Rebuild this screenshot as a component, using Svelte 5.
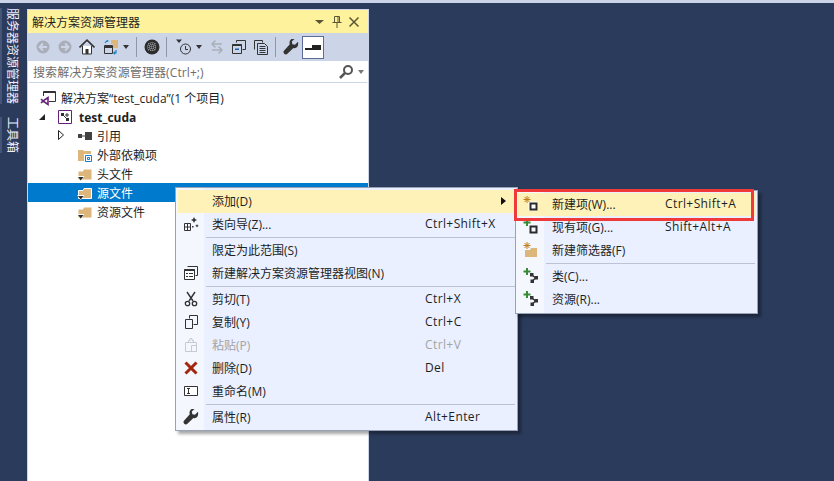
<script>
  const rows = [
    { label: '添加(D)', hot: true, arrow: true },
    { label: '类向导(Z)...', key: 'Ctrl+Shift+X', icon: 'wizard' },
    { sep: true },
    { label: '限定为此范围(S)' },
    { label: '新建解决方案资源管理器视图(N)', icon: 'view' },
    { sep: true },
    { label: '剪切(T)', key: 'Ctrl+X', icon: 'cut' },
    { label: '复制(Y)', key: 'Ctrl+C', icon: 'copy' },
    { label: '粘贴(P)', key: 'Ctrl+V', icon: 'paste', off: true },
    { label: '删除(D)', key: 'Del', icon: 'del' },
    { label: '重命名(M)', icon: 'rename' },
    { sep: true },
    { label: '属性(R)', key: 'Alt+Enter', icon: 'wrench' }
  ]

  const subRows = [
    { label: '新建项(W)...', key: 'Ctrl+Shift+A', icon: 'newitem', hot: true },
    { label: '现有项(G)...', key: 'Shift+Alt+A', icon: 'existing' },
    { label: '新建筛选器(F)', icon: 'newfilter' },
    { sep: true },
    { label: '类(C)...', icon: 'cls' },
    { label: '资源(R)...', icon: 'cls' }
  ]

  const tree = [
    { label: '引用', icon: 'refs', chevron: true },
    { label: '外部依赖项', icon: 'extern' },
    { label: '头文件', icon: 'filter' },
    { label: '源文件', icon: 'filter', selected: true },
    { label: '资源文件', icon: 'filter' }
  ]
</script>

{#snippet wrenchPath()}
  <path d="M15 2.800l-3 3-2.600-.6-.6-2.600 3-2.900c-2.700-.7-5.300 1.200-5.300 4 0 .6.100 1.100.3 1.600L1.200 11.400c-1 1-1 2.400 0 3.300.9.900 2.300.9 3.200 0l6-5.700c2.900 1 5.500-1.600 4.600-6.200z" fill="#333" />
{/snippet}

{#snippet menuIcon(name)}
  <svg width="16" height="16" viewBox="0 0 16 16">
    {#if name === 'wizard'}
      <path d="M1.500 7.500h6v7h-6zM1.500 11h6M4.500 7.500v7" fill="none" stroke="#333" />
      <path d="M11 1l1 2 2 1-2 1-1 2-1-2-2-1 2-1zM14 8l.6 1.200 1.200.6-1.200.6-.6 1.200-.6-1.200-1.200-.6 1.200-.6zM9 10h1.500v1.500H9z" fill="#333" />
    {:else if name === 'view'}
      <path d="M4.500 1.500h10v9h-2" fill="none" stroke="#333" />
      <path d="M1.500 4.500h10v10h-10z" fill="#fff" stroke="#333" />
      <path d="M1.500 4h10v2h-10zM3 8h2v1H3zM6 8h4v1H6zM3 11h2v1H3zM6 11h4v1H6z" fill="#333" />
    {:else if name === 'cut'}
      <path d="M4 1l6 9M12 1L6 10" fill="none" stroke="#333" stroke-width="1.400" />
      <circle cx="4.500" cy="12.500" r="2.200" fill="none" stroke="#333" stroke-width="1.300" />
      <circle cx="11.500" cy="12.500" r="2.200" fill="none" stroke="#333" stroke-width="1.300" />
    {:else if name === 'copy'}
      <path d="M6.500 4.500v-3h8v9h-4" fill="none" stroke="#333" />
      <path d="M2.500 5.500h7v9h-7z" fill="none" stroke="#333" />
    {:else if name === 'paste'}
      <path d="M2.500 5.500h11v9h-11z M5.500 5.500v-2h1.500v-2h2v2h1.500v2 M8.500 8.500h5v6h-5z" fill="none" stroke="#c6cad2" />
    {:else if name === 'del'}
      <path d="M2.500 2.500l11 11M13.500 2.500l-11 11" fill="none" stroke="#a1260d" stroke-width="3" />
    {:else if name === 'rename'}
      <path d="M1.500 3.500h13v9h-13z" fill="#fff" stroke="#333" />
      <path d="M4 5.500h3M4 10.500h3M5.500 5.500v5" fill="none" stroke="#333" />
    {:else if name === 'wrench'}
      {@render wrenchPath()}
    {:else if name === 'newitem'}
      <path d="M5.500 5.500h9v9h-9z" fill="#fff" />
      <path d="M7.500 7.500h6v6h-6z" fill="none" stroke="#2b2b2b" stroke-width="2" />
      <path d="M4 0v7M.5 3.500h7M1.500 1l5 5M6.500 1l-5 5" stroke="#c27d1a" stroke-width="1" />
    {:else if name === 'existing'}
      <path d="M7.500 7.500h6v6h-6z" fill="none" stroke="#2b2b2b" stroke-width="2" />
      <path d="M4 0v7M.5 3.500h7" stroke="#388a34" stroke-width="2" />
    {:else if name === 'newfilter'}
      <path d="M2 8h5l1-2h6v9H2z" fill="#dcb67a" />
      <path d="M4 0v7M.5 3.500h7M1.500 1l5 5M6.500 1l-5 5" stroke="#c27d1a" stroke-width="1" />
    {:else if name === 'cls'}
      <path d="M8.500 6.500l4 3.500-3.500 3.500" fill="none" stroke="#333" stroke-width="1.300" />
      <path d="M7 5h3.500v3.500H7zM11.500 8H15v3.500h-3.500zM7.500 11.500H11V15H7.500z" fill="#333" />
      <path d="M4 0v7M.5 3.500h7" stroke="#388a34" stroke-width="2" />
    {/if}
  </svg>
{/snippet}

{#snippet treeIcon(name, selected)}
  <svg width="16" height="16" viewBox="0 0 16 16">
    {#if name === 'refs'}
      <path d="M1 6h4v4H1zM8 4h7v8H8z" fill="#424242" />
      <path d="M5 8h3" stroke="#424242" />
    {:else if name === 'extern'}
      <path d="M1 3h5l1 1h7v3H7v7H1z" fill="#dcb67a" />
      <path d="M8.500 8.500h6v6h-6z" fill="#fff" stroke="#1b80c4" />
      <path d="M10.500 10.500h2v2h-2z" fill="none" stroke="#1b80c4" />
    {:else}
      <path d="M1.500 5.500h4.500l1-2h7.500v10H1.500z" fill="#dcb67a" stroke={selected ? '#fff' : 'none'} />
      <path d="M0 10h7.500L3.700 15z" fill="#fff" />
      <path d="M1 11h5.500L3.700 14.500z" fill="#2a2a2a" />
    {/if}
  </svg>
{/snippet}

<div class="ide">
  <div class="topstrip"></div>
  <div class="workspace">
    <div class="rail">
      <span class="railtab">服务器资源管理器</span>
      <span class="railtab">工具箱</span>
    </div>

    <section class="explorer">
      <header class="titlebar">
        <span>解决方案资源管理器</span>
        <div class="titlebtns">
          <svg width="12" height="12" viewBox="0 0 12 12"><path d="M1 4h9L5.500 8z" fill="#5a5636" /></svg>
          <svg width="12" height="12" viewBox="0 0 12 12"><path d="M3.500 .5h5v6h-5zM1.500 6.500h9M6 7v5M7 1v5" fill="none" stroke="#5a5636" /></svg>
          <svg width="12" height="12" viewBox="0 0 12 12"><path d="M1.500 1.500l9 9M10.500 1.500l-9 9" stroke="#5a5636" stroke-width="1.500" /></svg>
        </div>
      </header>

      <div class="toolbar">
        <svg class="tool" width="16" height="16" viewBox="0 0 16 16"><circle cx="8" cy="8" r="6.500" fill="#a9aeb8" /><path d="M12 8H5M8 4.500L4.500 8 8 11.500" fill="none" stroke="#ccd5e8" stroke-width="1.800" /></svg>
        <svg class="tool" width="16" height="16" viewBox="0 0 16 16"><circle cx="8" cy="8" r="6.500" fill="#a9aeb8" /><path d="M4 8h7M8 4.500L11.500 8 8 11.500" fill="none" stroke="#ccd5e8" stroke-width="1.800" /></svg>
        <svg class="tool" width="16" height="16" viewBox="0 0 16 16"><path d="M3.500 7v8h9V7" fill="#fff" stroke="#333" /><path d="M.5 8.500L8 1.200l7.500 7.300" fill="none" stroke="#333" stroke-width="1.600" /><path d="M6.500 10h3v5h-3z" fill="#333" /></svg>
        <svg class="tool solbtn" width="16" height="16" viewBox="0 0 16 16"><path d="M8 1h7v8H10V5H8z" fill="#dcb67a" /><path d="M1.500 6.500h8v8h-8z" fill="#ccd5e8" stroke="#333" /><path d="M1.500 7h8v2h-8z" fill="#333" /><path d="M2 4l2-2.500M4 1.500l1.500.5M4 1.500V3" fill="none" stroke="#1b80c4" stroke-width="1.200" /><path d="M13 11v3h-2.500M10.500 14l1.500-1.300M10.500 14l1.500 1.300" fill="none" stroke="#1b80c4" stroke-width="1.200" /></svg>
        <svg class="caret" width="8" height="4" viewBox="0 0 8 4"><path d="M1 0h6L4 4z" fill="#333" /></svg>
        <i class="tbsep"></i>
        <svg class="tool" width="16" height="16" viewBox="0 0 16 16"><circle cx="8" cy="8" r="7.500" fill="#2d2d2d" /><path d="M5 4v8M7 3v10M9 3v10M11 4v8M4 5h8M3 7h10M3 9h10M4 11h8" stroke="#c9ccd6" stroke-width=".7" stroke-dasharray="1 1" /></svg>
        <i class="tbsep"></i>
        <svg class="tool clock" width="16" height="16" viewBox="0 0 16 16"><circle cx="9.500" cy="10" r="5" fill="none" stroke="#333" /><path d="M9.500 7v3.500H12" fill="none" stroke="#333" /><path d="M0 .5h6L3 4z" fill="#333" /></svg>
        <svg class="caret" width="8" height="4" viewBox="0 0 8 4"><path d="M1 0h6L4 4z" fill="#333" /></svg>
        <svg class="tool" width="16" height="16" viewBox="0 0 16 16"><path d="M3 5h10M6.500 1.500L3 5l3.500 3.500M13 11H3M9.500 7.500L13 11l-3.500 3.500" fill="none" stroke="#a9aeb8" stroke-width="1.500" /></svg>
        <svg class="tool" width="16" height="16" viewBox="0 0 16 16"><path d="M5.500 3.500v-2h9v9h-3" fill="none" stroke="#333" /><path d="M1.500 5.500h9v9h-9z" fill="none" stroke="#333" /><path d="M4 9.500h4v1.500H4z" fill="#1b5fa8" /><path d="M1.500 5.500h9v1.500h-9z" fill="#333" /></svg>
        <svg class="tool" width="16" height="16" viewBox="0 0 16 16"><path d="M1.500 10.500v-9h8v2M4.500 15.500v-11h7l3 3v8z" fill="none" stroke="#333" /><path d="M6.500 7.500h6M6.500 9.500h6M6.500 11.500h6M6.500 13.500h6" stroke="#333" /></svg>
        <i class="tbsep"></i>
        <svg class="tool wrench" width="16" height="16" viewBox="0 0 16 16">{@render wrenchPath()}</svg>
        <span class="toggle"><svg width="16" height="16" viewBox="0 0 16 16"><path d="M0 9h16v2H0zM7 6h9v3H7z" fill="#222" /></svg></span>
      </div>

      <div class="search">
        <span class="placeholder">搜索解决方案资源管理器(Ctrl+;)</span>
        <svg width="16" height="16" viewBox="0 0 16 16"><circle cx="10" cy="6" r="4" fill="none" stroke="#555" stroke-width="2" /><path d="M7 9l-5 5" stroke="#555" stroke-width="2.500" /></svg>
        <svg class="caret" width="8" height="4" viewBox="0 0 8 4"><path d="M1 0h6L4 4z" fill="#777" /></svg>
      </div>

      <div class="tree">
        <div class="node solution">
          <svg width="16" height="16" viewBox="0 0 16 16"><path d="M3.500 6V1.500h12v10H9" fill="none" stroke="#333" /><path d="M3.500 1.500h12v1.500h-12z" fill="#333" /><path d="M1 9l2 2-2 2M8 7.500v7L3 11z" fill="none" stroke="#68217a" stroke-width="1.600" /></svg>
          <span>解决方案“test_cuda”(1 个项目)</span>
        </div>
        <div class="node project">
          <svg class="expander" width="8" height="8" viewBox="0 0 8 8"><path d="M7 1v6H1z" fill="#222" /></svg>
          <svg width="16" height="16" viewBox="0 0 16 16"><path d="M1.500 1.500h13v13h-13z" fill="#fff" stroke="#68217a" /><path d="M4 4h3v3H4zM9 9h3v3H9z" fill="#333" /><path d="M7 7l2 2M10 4v4M8 6h4" stroke="#333" /></svg>
          <b>test_cuda</b>
        </div>
        {#each tree as item}
          <div class="node child" class:selected={item.selected}>
            {#if item.chevron}
              <svg class="chevron" width="8" height="10" viewBox="0 0 8 10"><path d="M1.500 .5l5 4.500-5 4.500z" fill="#fff" stroke="#222" /></svg>
            {/if}
            <span class="nodeicon">{@render treeIcon(item.icon, item.selected)}</span>
            <span>{item.label}</span>
          </div>
        {/each}
      </div>
    </section>
  </div>

  <div class="menu main">
    {#each rows as row}
      {#if row.sep}
        <div class="sep"></div>
      {:else}
        <div class="row" class:hot={row.hot} class:off={row.off}>
          <span class="gutter">{#if row.icon}{@render menuIcon(row.icon)}{/if}</span>
          <span class="label">{row.label}</span>
          {#if row.key}<span class="key">{row.key}</span>{/if}
          {#if row.arrow}<svg class="arrow" width="5" height="8" viewBox="0 0 5 8"><path d="M0 0l5 4-5 4z" fill="#111" /></svg>{/if}
        </div>
      {/if}
    {/each}
  </div>

  <div class="menu sub">
    {#each subRows as row}
      {#if row.sep}
        <div class="sep"></div>
      {:else}
        <div class="row" class:hot={row.hot}>
          <span class="gutter">{@render menuIcon(row.icon)}</span>
          <span class="label">{row.label}</span>
          {#if row.key}<span class="key">{row.key}</span>{/if}
        </div>
      {/if}
    {/each}
  </div>

  <div class="callout"></div>
</div>

<style>
  :global(body) {
    margin: 0;
    background: #2b3b5b;
  }

  .ide {
    position: relative;
    width: 834px;
    height: 481px;
    overflow: hidden;
    background: #2b3b5b;
    font-family: "Open Sans", "Noto Sans CJK SC", sans-serif;
    font-size: 12px;
    color: #1e1e1e;
  }

  .topstrip {
    height: 3px;
    background: #ccd5e8;
  }

  .workspace {
    display: flex;
    height: 478px;
    padding-top: 7px;
    box-sizing: border-box;
  }

  .rail {
    width: 28px;
    flex: none;
    margin-top: -2px;
    display: flex;
    flex-direction: column;
    align-items: flex-start;
    gap: 13px;
    color: #eef0ff;
  }

  .railtab {
    display: block;
    writing-mode: vertical-rl;
    text-orientation: sideways;
    white-space: nowrap;
    line-height: 12px;
    border-left: 2px solid #45557a;
    padding-left: 4px;
  }

  .explorer {
    width: 340px;
    flex: none;
    background: #fff;
    display: flex;
    flex-direction: column;
    box-shadow: 0 0 0 1px #ccd5e8;
  }

  .titlebar {
    height: 23px;
    background: #fff29d;
    display: flex;
    align-items: center;
    justify-content: space-between;
    padding: 0 7px 0 4px;
  }

  .titlebtns {
    display: flex;
    gap: 5px;
    padding-right: 1px;
  }

  .toolbar {
    height: 28px;
    background: #ccd5e8;
    display: flex;
    align-items: center;
    padding-left: 4px;
    box-sizing: border-box;
  }

  .tool {
    margin: 0 3px;
    flex: none;
  }

  .solbtn {
    margin-left: 5px;
    margin-right: 0;
  }

  .clock {
    margin-left: 5px;
    margin-right: 0;
  }

  .wrench {
    margin-right: 3px;
  }

  .caret {
    flex: none;
    margin: 0 3px;
  }

  .tbsep {
    width: 1px;
    height: 20px;
    background: #8f98ab;
    margin: 0 4px 0 3px;
  }

  .toggle {
    width: 22px;
    height: 23px;
    display: flex;
    align-items: center;
    justify-content: center;
    background: #fff;
    border: 1px solid #5d6b99;
    box-sizing: border-box;
  }

  .search {
    height: 22px;
    margin: 0 1px;
    background: #fff;
    border: 1px solid #ccd5e8;
    border-width: 0 0 1px;
    display: flex;
    align-items: center;
    padding: 0 0 0 4px;
    color: #6d6d6d;
    box-sizing: border-box;
  }

  .search .caret {
    margin-right: 2px;
  }

  .placeholder {
    flex: 1;
    letter-spacing: 0.1px;
  }

  .tree {
    padding-top: 5px;
  }

  .node {
    height: 19px;
    display: flex;
    align-items: center;
    white-space: nowrap;
  }

  .solution {
    padding-left: 12px;
    gap: 5px;
  }

  .project {
    padding-left: 10px;
  }

  .expander {
    margin-right: 11px;
  }

  .project b {
    margin-left: 6px;
    font-weight: 700;
    position: relative;
    top: 1px;
  }

  .child {
    position: relative;
    padding-left: 49px;
    gap: 4px;
  }

  .chevron {
    position: absolute;
    left: 29px;
    top: 4px;
  }

  .nodeicon {
    display: flex;
  }

  .selected {
    background: #007acc;
    color: #fff;
  }

  .menu {
    position: absolute;
    background: linear-gradient(90deg, #f5f7ff 28px, #eaf0ff 28px);
    border: 1px solid #98a2b8;
    box-shadow: 3px 3px 3px rgba(0, 0, 0, 0.35);
    box-sizing: border-box;
    padding: 2px;
  }

  .main {
    left: 175px;
    top: 187px;
    width: 343px;
    height: 244px;
  }

  .sub {
    left: 515px;
    top: 190px;
    width: 243px;
    height: 124px;
  }

  .row {
    position: relative;
    height: 23px;
    padding-bottom: 2px;
    box-sizing: border-box;
    display: flex;
    align-items: center;
    white-space: nowrap;
  }

  .hot {
    background: #fff2b8;
  }

  .off {
    color: #a2a4a5;
  }

  .gutter {
    width: 26px;
    flex: none;
    display: flex;
    justify-content: center;
  }

  .label {
    margin-left: 8px;
  }

  .key {
    position: absolute;
    left: 247px;
    letter-spacing: 0.4px;
  }

  .sub .key {
    left: 147px;
  }

  .arrow {
    position: absolute;
    right: 9px;
    top: 7px;
  }

  .sep {
    margin-left: 28px;
    border-top: 1px solid #bcc3d4;
    box-sizing: border-box;
    margin-top: 1px;
    height: 2px;
  }

  .callout {
    position: absolute;
    left: 514px;
    top: 189px;
    width: 240px;
    height: 32px;
    border: 3px solid #f03a3a;
    box-sizing: border-box;
  }
</style>
